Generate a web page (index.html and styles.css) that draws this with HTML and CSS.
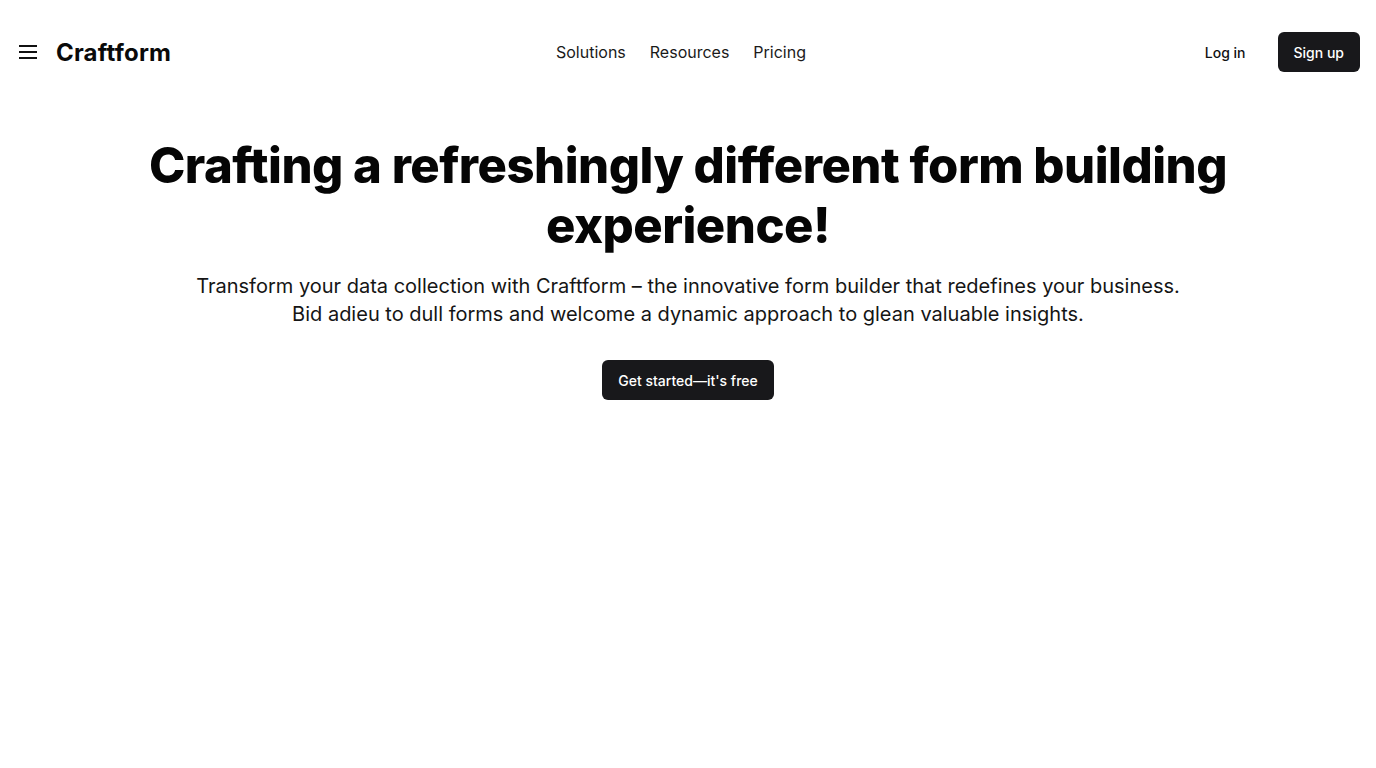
FILE: index.html
```html
<!DOCTYPE html>
<html lang="en">
<head>
<meta charset="utf-8">
<title>Craftform</title>
<link rel="stylesheet" href="styles.css">
</head>
<body>
<header class="header">
  <div class="brand">
    <button class="menu-btn" aria-label="Menu">
      <svg width="18" height="14" viewBox="0 0 18 14" fill="none" stroke="#111" stroke-width="2"><path d="M0 1h18M0 7h18M0 13h18"/></svg>
    </button>
    <span class="logo">Craftform</span>
  </div>
  <nav class="nav">
    <a href="#">Solutions</a>
    <a href="#">Resources</a>
    <a href="#">Pricing</a>
  </nav>
  <div class="actions">
    <a class="login" href="#">Log in</a>
    <a class="btn" href="#">Sign up</a>
  </div>
</header>
<main class="hero">
  <h1>Crafting a refreshingly different form building experience!</h1>
  <p>Transform your data collection with Craftform – the innovative form builder that redefines your business.<br>Bid adieu to dull forms and welcome a dynamic approach to glean valuable insights.</p>
  <a class="btn cta" href="#">Get started—it's free</a>
</main>
</body>
</html>
```
FILE: styles.css
```css
* { box-sizing: border-box; }
body {
  margin: 0;
  font-family: Inter, "Noto Sans", sans-serif;
  color: #111;
  background: #fff;
}
a { text-decoration: none; color: inherit; }
.header {
  display: flex;
  align-items: center;
  justify-content: space-between;
  height: 104px;
  padding: 0 16px 0 16px;
  position: relative;
}
.brand { display: flex; align-items: center; gap: 16px; }
.menu-btn {
  border: 0; background: none; padding: 0 0 0 3px; width: 24px; height: 24px;
  display: flex; align-items: center; cursor: pointer;
}
.logo { font-size: 24px; font-weight: 700; letter-spacing: 0.2px; color: #0a0a0a; }
.nav {
  position: absolute; left: 50%; top: 50%; transform: translate(calc(-50% - 7px), -50%);
  display: flex; gap: 24px; font-size: 16px; color: #1a1a1a;
}
.actions { display: flex; align-items: center; gap: 32px; }
.login { font-size: 14px; font-weight: 500; }
.btn {
  display: inline-flex; align-items: center; justify-content: center;
  background: #18181b; color: #fff; border-radius: 6px;
  height: 40px; padding: 0 16px; font-size: 14px; font-weight: 500;
}
.hero {
  display: flex; flex-direction: column; align-items: center; text-align: center;
  padding-top: 32px;
}
.hero h1 {
  margin: 0; font-size: 49px; line-height: 60px; font-weight: 800;
  letter-spacing: -0.5px; color: #050505; max-width: 1120px;
}
.hero p {
  margin: 16px 0 0; font-size: 20px; line-height: 28px; color: #151515;
}
.cta { margin-top: 32px; font-size: 14px; padding: 0 16px; }
```
